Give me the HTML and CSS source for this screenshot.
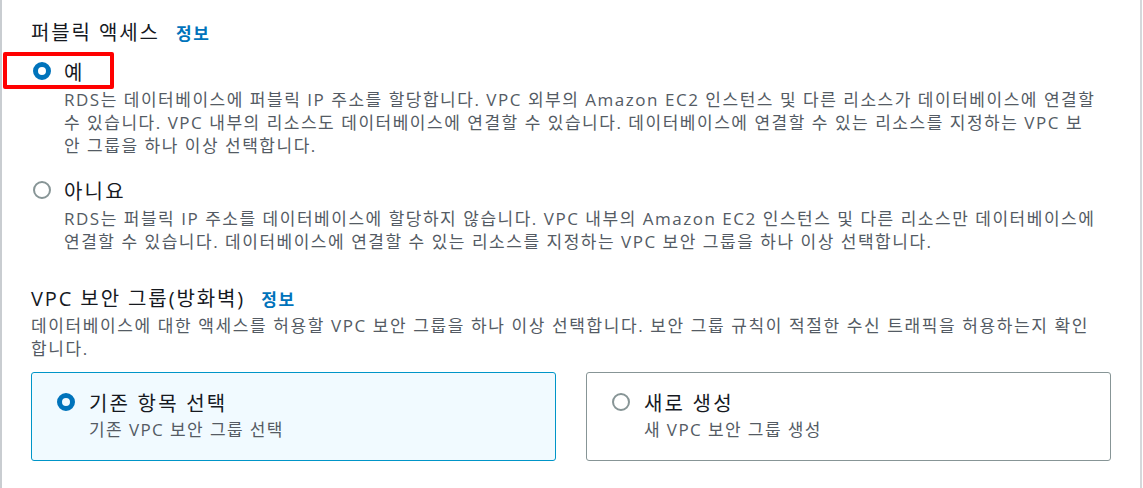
FILE: index.html
```html
<!DOCTYPE html>
<html lang="ko">
<head>
<meta charset="utf-8">
<link rel="stylesheet" href="styles.css">
</head>
<body>
<div class="panel">
  <div class="section">
    <div class="label"><span class="label-text">퍼블릭 액세스</span><a class="info">정보</a></div>
    <div class="options">
      <div class="option">
        <div class="option-head highlight">
          <span class="radio checked"></span><span class="option-title">예</span>
        </div>
        <div class="option-desc">RDS는 데이터베이스에 퍼블릭 IP 주소를 할당합니다. VPC 외부의 Amazon EC2 인스턴스 및 다른 리소스가 데이터베이스에 연결할<br>수 있습니다. VPC 내부의 리소스도 데이터베이스에 연결할 수 있습니다. 데이터베이스에 연결할 수 있는 리소스를 지정하는 VPC 보<br>안 그룹을 하나 이상 선택합니다.</div>
      </div>
      <div class="option">
        <div class="option-head">
          <span class="radio"></span><span class="option-title">아니요</span>
        </div>
        <div class="option-desc">RDS는 퍼블릭 IP 주소를 데이터베이스에 할당하지 않습니다. VPC 내부의 Amazon EC2 인스턴스 및 다른 리소스만 데이터베이스에<br>연결할 수 있습니다. 데이터베이스에 연결할 수 있는 리소스를 지정하는 VPC 보안 그룹을 하나 이상 선택합니다.</div>
      </div>
    </div>
  </div>
  <div class="section second">
    <div class="label"><span class="label-text">VPC 보안 그룹(방화벽)</span><a class="info">정보</a></div>
    <div class="section-desc">데이터베이스에 대한 액세스를 허용할 VPC 보안 그룹을 하나 이상 선택합니다. 보안 그룹 규칙이 적절한 수신 트래픽을 허용하는지 확인<br>합니다.</div>
    <div class="tiles">
      <div class="tile selected">
        <div class="tile-head"><span class="radio checked"></span><span class="tile-title">기존 항목 선택</span></div>
        <div class="tile-desc">기존 VPC 보안 그룹 선택</div>
      </div>
      <div class="tile">
        <div class="tile-head"><span class="radio"></span><span class="tile-title">새로 생성</span></div>
        <div class="tile-desc">새 VPC 보안 그룹 생성</div>
      </div>
    </div>
  </div>
</div>
</body>
</html>
```

FILE: styles.css
```css
* { box-sizing: border-box; }
html, body { margin: 0; padding: 0; background: #fff; }
body {
  font-family: "Open Sans", "Noto Sans CJK KR", sans-serif;
  color: #16191f;
  width: 1143px;
  height: 488px;
  overflow: hidden;
}
.panel {
  height: 488px;
  border-left: 2px solid #c9cdd1;
  border-right: 2px solid #d5d8db;
  width: 1142px;
  padding: 19px 0 0 29px;
}
.label {
  display: flex;
  align-items: baseline;
  gap: 16px;
  line-height: 28px;
}
.label-text { font-size: 20px; letter-spacing: 1.9px; }
.info { font-size: 17px; font-weight: 700; color: #0073bb; letter-spacing: 1.8px; }
.options { display: flex; flex-direction: column; gap: 16px; margin-top: 6px; }
.option-head {
  display: flex;
  align-items: center;
  gap: 13px;
  height: 34px;
  position: relative;
}
.option-head.highlight::before {
  content: "";
  box-sizing: border-box;
  position: absolute;
  left: -28px;
  top: -2px;
  width: 111px;
  height: 37px;
  border: 4px solid #ff0000;
  border-radius: 2px;
}
.radio {
  width: 18px;
  height: 18px;
  border-radius: 50%;
  border: 2px solid #879596;
  flex: none;
  margin-left: 2px;
}
.radio.checked { border: 5px solid #0073bb; }
.option-title { font-size: 20px; letter-spacing: 2.2px; }
.option-desc {
  margin-left: 33px;
  font-size: 17px;
  letter-spacing: 1.52px;
  line-height: 23px;
  color: #545b64;
  white-space: nowrap;
}
.second { margin-top: 32px; }
.section-desc {
  font-size: 17px;
  letter-spacing: 1.6px;
  line-height: 23px;
  color: #545b64;
  white-space: nowrap;
  margin-top: 0;
}
.tiles {
  display: grid;
  grid-template-columns: 525px 525px;
  gap: 30px;
  margin-top: 12px;
}
.tile {
  height: 89px;
  border: 1px solid #879596;
  border-radius: 3px;
  padding: 15px 0 0 23px;
}
.tile.selected { border-color: #0095c8; background: #f1faff; }
.tile-head { display: flex; align-items: center; gap: 14px; height: 28px; }
.tile-head .radio { margin-left: 2px; }
.tile-title { font-size: 20px; letter-spacing: 2.2px; }
.tile-desc { margin-left: 34px; font-size: 17px; letter-spacing: 1.4px; color: #545b64; line-height: 28px; }
```
